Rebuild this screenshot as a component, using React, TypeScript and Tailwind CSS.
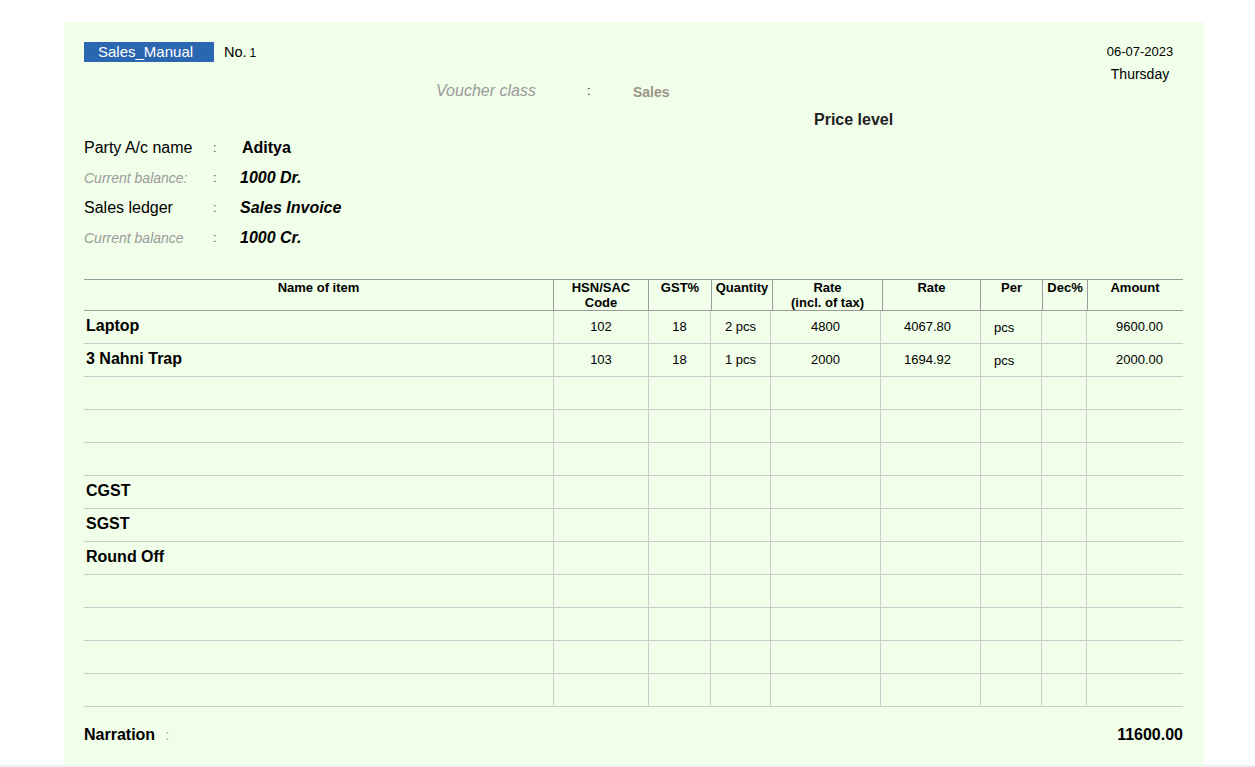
import React from "react";

// ─── Data ───────────────────────────────────────────────────────────────────

type Row = {
  name: string;
  hsn?: string;
  gst?: string;
  qty?: string;
  rateIncl?: string;
  rate?: string;
  per?: string;
  dec?: string;
  amount?: string;
};

const rows: Row[] = [
  { name: "Laptop", hsn: "102", gst: "18", qty: "2 pcs", rateIncl: "4800", rate: "4067.80", per: "pcs", amount: "9600.00" },
  { name: "3 Nahni Trap", hsn: "103", gst: "18", qty: "1 pcs", rateIncl: "2000", rate: "1694.92", per: "pcs", amount: "2000.00" },
  { name: "" },
  { name: "" },
  { name: "" },
  { name: "CGST" },
  { name: "SGST" },
  { name: "Round Off" },
  { name: "" },
  { name: "" },
  { name: "" },
  { name: "" },
];

const ledger = [
  { label: "Party A/c name", value: "Aditya", sub: false },
  { label: "Current balance:", value: "1000 Dr.", sub: true },
  { label: "Sales ledger", value: "Sales Invoice", sub: false },
  { label: "Current balance", value: "1000 Cr.", sub: true },
];

// ─── Table ──────────────────────────────────────────────────────────────────

function TableHead() {
  const th = "border-l border-[#9a9a9a] text-center font-bold text-[13px] leading-[15px] text-black";
  return (
    <div className="flex h-[32px] border-y border-[#9a9a9a]">
      <div className="w-[469px] text-center font-bold text-[13px] leading-[15px]">Name of item</div>
      <div className={`w-[95px] ${th}`}>
        HSN/SAC
        <br />
        Code
      </div>
      <div className={`w-[63px] ${th}`}>GST%</div>
      <div className={`w-[61px] ${th}`}>Quantity</div>
      <div className={`w-[110px] ${th}`}>
        Rate
        <br />
        (incl. of tax)
      </div>
      <div className={`w-[98px] ${th}`}>Rate</div>
      <div className={`w-[62px] ${th}`}>Per</div>
      <div className={`w-[45px] ${th}`}>Dec%</div>
      <div className={`w-[95px] ${th}`}>Amount</div>
    </div>
  );
}

function TableRow({ row }: { row: Row }) {
  const td = "border-l border-[#cccccc] flex items-center text-[13px] text-black";
  return (
    <div className="flex h-[33px] border-b border-[#cccccc]">
      <div className="w-[469px] flex items-center pl-[2px] pb-[3px] text-[16px] font-bold text-black">{row.name}</div>
      <div className={`w-[95px] justify-center ${td}`}>{row.hsn}</div>
      <div className={`w-[62px] justify-center ${td}`}>{row.gst}</div>
      <div className={`w-[60px] justify-center ${td}`}>{row.qty}</div>
      <div className={`w-[110px] justify-center ${td}`}>{row.rateIncl}</div>
      <div className={`w-[100px] justify-center pr-[6px] ${td}`}>{row.rate}</div>
      <div className={`w-[61px] pl-[13px] pt-[2px] ${td}`}>{row.per}</div>
      <div className={`w-[45px] ${td}`}>{row.dec}</div>
      <div className={`w-[97px] justify-end pr-[20px] ${td}`}>{row.amount}</div>
    </div>
  );
}

// ─── Page ───────────────────────────────────────────────────────────────────

export default function App() {
  return (
    <div className="min-h-[767px] bg-white font-['Liberation_Sans',Arial,sans-serif] text-black">
      <div className="pt-[22px]">
        <div className="ml-[64px] w-[1140px] bg-[#f1fee9] pl-[20px] pr-[21px] pt-[20px] pb-[20px]">
          {/* Top: voucher type, number, date */}
          <div className="flex">
            <div className="flex-1">
              <div className="flex items-center h-[20px]">
                <div className="w-[130px] h-[20px] bg-[#2b66b1] pl-[14px] text-[15px] leading-[20px] text-white">
                  Sales_Manual
                </div>
                <div className="ml-[10px] text-[14.5px] leading-[20px]">
                  No.<span className="ml-[3px] text-[12px]">1</span>
                </div>
              </div>
              <div className="mt-[19px] flex h-[20px] items-center pl-[352px]">
                <span className="w-[151px] italic text-[16px] text-[#9b9b9b]">Voucher class</span>
                <span className="w-[46px] text-[13px] text-[#333]">:</span>
                <span className="pt-[2px] text-[14px] font-bold text-[#9a9485]">Sales</span>
              </div>
              <div className="mt-[9px] h-[20px] pl-[730px] text-[16px] font-bold leading-[20px] text-[#222]">
                Price level
              </div>
            </div>
            <div className="mr-[7px] w-[72px] text-center">
              <div className="text-[13px] leading-[20px]">06-07-2023</div>
              <div className="mt-[2px] text-[14px] leading-[20px]">Thursday</div>
            </div>
          </div>

          {/* Ledger details */}
          <div className="mt-[3px]">
            {ledger.map((l) => (
              <div key={l.label} className="flex h-[30px] items-center">
                <span
                  className={`w-[129px] ${
                    l.sub ? "italic text-[14px] text-[#9b9b9b]" : "text-[16px] text-black"
                  }`}
                >
                  {l.label}
                </span>
                <span className="w-[27px] text-[13px] text-[#555]">:</span>
                <span className={`text-[16px] font-bold ${l.sub || l.label === "Sales ledger" ? "italic" : "pl-[2px]"}`}>
                  {l.value}
                </span>
              </div>
            ))}
          </div>

          {/* Items */}
          <div className="mt-[26px]">
            <TableHead />
            {rows.map((r, i) => (
              <TableRow key={i} row={r} />
            ))}
          </div>

          {/* Footer */}
          <div className="mt-[18px] flex h-[20px] items-center justify-between text-[16px] font-bold">
            <div>
              Narration <span className="ml-[6px] font-normal text-[14px] text-[#b9a36a]">:</span>
            </div>
            <div>11600.00</div>
          </div>
        </div>
        <div className="h-[2px] bg-[#eeeeee]" />
      </div>
    </div>
  );
}
